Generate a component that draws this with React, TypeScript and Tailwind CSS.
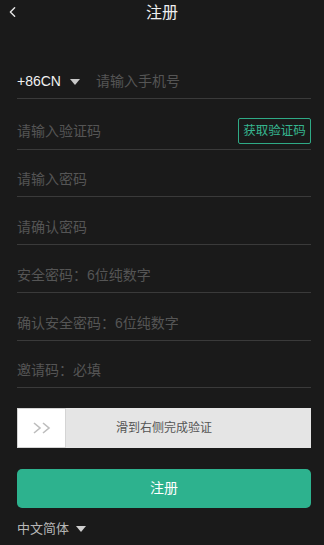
import { ChevronLeft } from "lucide-react";

const font = { fontFamily: '"Liberation Sans", "Noto Sans CJK SC", sans-serif' };

const fields = [
  { label: "请输入密码", h: "h-[47px]" },
  { label: "请确认密码", h: "h-[48px]" },
  { label: "安全密码：6位纯数字", h: "h-[48px]" },
  { label: "确认安全密码：6位纯数字", h: "h-[48px]" },
  { label: "邀请码：必填", h: "h-[47px]" },
];

function Caret({ className }: { className: string }) {
  return (
    <svg viewBox="0 0 10 6" className={className}>
      <path d="M0 0h10L5 6z" fill="currentColor" />
    </svg>
  );
}

export default function App() {
  return (
    <div className="w-[324px] h-[545px] bg-[#1a1a1a] text-white overflow-hidden" style={font}>
      <div className="relative h-[24px] flex items-center justify-center">
        <ChevronLeft className="absolute left-[4px] top-[2px] w-[17px] h-[20px] text-[#e5e5e5]" strokeWidth={2} />
        <span className="text-[16px] text-[#eee] mt-[1px]">注册</span>
      </div>

      <div className="pl-[17px] pr-[13px] pt-[39px]">
        <div className="h-[36px] flex items-end pb-[6px] border-b border-[#3a3a3a]">
          <span className="text-[14px] text-[#f0f0f0]">+86CN</span>
          <Caret className="w-[10px] h-[6px] ml-[9px] mb-[7px] text-[#c8c8c8]" />
          <span className="ml-[16px] text-[14px] text-[#555]">请输入手机号</span>
        </div>

        <div className="h-[51px] flex items-center justify-between pt-[19px] pb-[5px] border-b border-[#3a3a3a]">
          <span className="text-[14px] text-[#555]">请输入验证码</span>
          <button className="w-[73px] h-[26px] border border-[#2faa86] text-[#36b58f] text-[12.5px] rounded-[2px]">
            获取验证码
          </button>
        </div>

        {fields.map((f) => (
          <div key={f.label} className={`${f.h} flex items-end pb-[6px] border-b border-[#3a3a3a]`}>
            <span className="text-[14px] text-[#555]">{f.label}</span>
          </div>
        ))}

        <div className="mt-[20px] h-[40px] flex bg-[#e5e5e5]">
          <div className="w-[49px] h-full bg-white border border-[#d4d4d4] flex items-center justify-center">
            <svg viewBox="0 0 18 12" className="w-[18px] h-[12px] text-[#bdbdbd]">
              <path d="M1 1l6 5-6 5M10 1l6 5-6 5" fill="none" stroke="currentColor" strokeWidth="1.6" />
            </svg>
          </div>
          <div className="flex-1 flex items-center justify-center text-[12px] text-[#555] pr-[49px]">
            滑到右侧完成验证
          </div>
        </div>

        <button className="mt-[21px] w-full h-[39px] rounded-[5px] bg-[#2db28e] text-white text-[14px]">
          注册
        </button>

        <div className="mt-[11px] flex items-center">
          <span className="text-[13px] text-[#b8b8b8]">中文简体</span>
          <Caret className="w-[10px] h-[6px] ml-[7px] text-[#cfcfcf]" />
        </div>
      </div>
    </div>
  );
}
